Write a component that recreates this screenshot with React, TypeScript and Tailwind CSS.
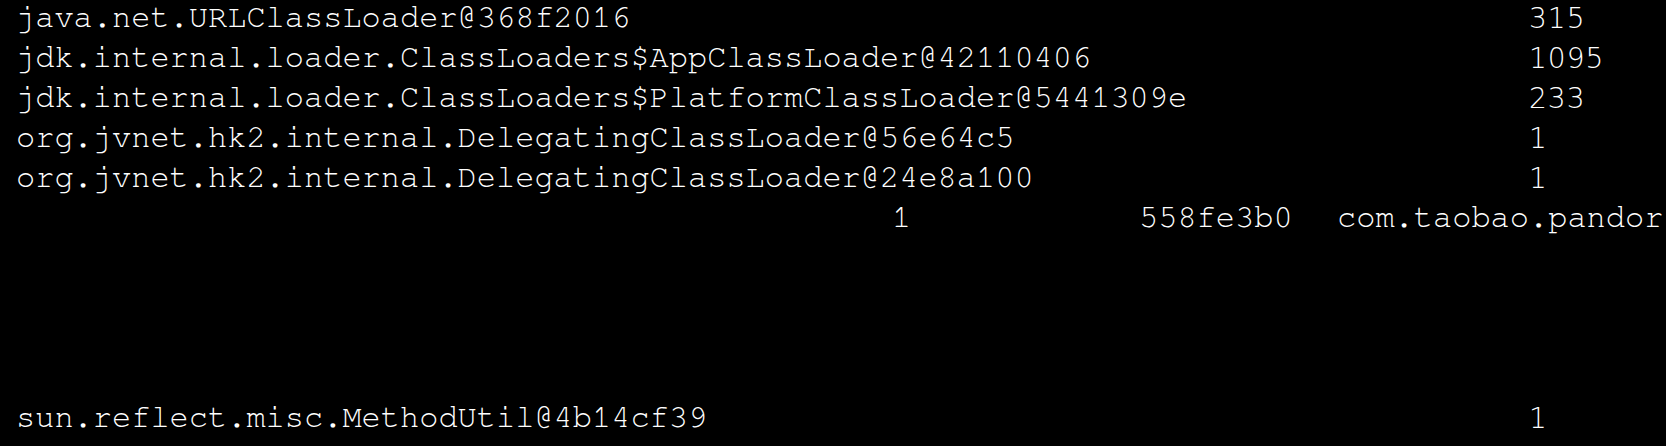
import React from "react";

const rows: { name: string; count: string }[] = [
  { name: "java.net.URLClassLoader@368f2016", count: "315" },
  { name: "jdk.internal.loader.ClassLoaders$AppClassLoader@42110406", count: "1095" },
  { name: "jdk.internal.loader.ClassLoaders$PlatformClassLoader@5441309e", count: "233" },
  { name: "org.jvnet.hk2.internal.DelegatingClassLoader@56e64c5", count: "1" },
  { name: "org.jvnet.hk2.internal.DelegatingClassLoader@24e8a100", count: "1" },
];

const Row = ({ name, count }: { name: string; count: string }) => (
  <div className="flex h-[40px] items-center whitespace-nowrap">
    <span className="w-[1529px] pl-[16px] font-['Nimbus_Mono_PS','FreeMono','Courier',monospace] text-[32px] leading-[40px]">
      {name}
    </span>
    <span className="font-['DejaVu_Sans',sans-serif] font-extralight text-[28px] leading-[40px] tracking-[1px] pt-[4px]">
      {count}
    </span>
  </div>
);

const App = () => {
  return (
    <div className="w-[1666px] h-[446px] overflow-hidden bg-black text-white">
      <div className="-mt-[3px]">
        {rows.map((r) => (
          <Row key={r.name} name={r.name} count={r.count} />
        ))}
        <div className="flex h-[40px] items-center whitespace-nowrap font-['Nimbus_Mono_PS','FreeMono','Courier',monospace] text-[32px] leading-[40px]">
          <span className="w-[1139px] pl-[892px]">1</span>
          <span className="w-[198px]">558fe3b0</span>
          <span>com.taobao.pandor</span>
        </div>
        <div className="h-[160px]" />
        <Row name="sun.reflect.misc.MethodUtil@4b14cf39" count="1" />
      </div>
    </div>
  );
};

export default App;
